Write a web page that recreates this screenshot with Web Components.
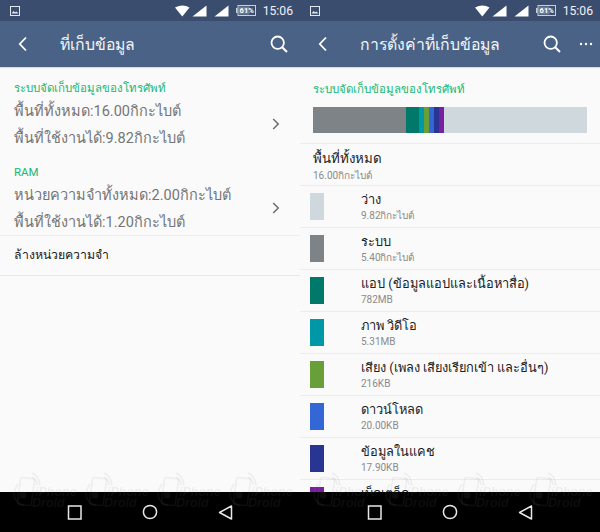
<!DOCTYPE html>
<html>
<head>
<meta charset="utf-8">
<style>
  html, body { margin: 0; padding: 0; background: #fafafa; }
  body { width: 600px; height: 532px; overflow: hidden; font-family: Roboto, "Noto Sans", sans-serif; }
  #screens { display: grid; grid-template-columns: 300px 300px; height: 532px; }
</style>
</head>
<body>
<div id="screens">
  <phone-screen>
    <status-bar></status-bar>
    <app-bar title="ที่เก็บข้อมูล"></app-bar>
    <div slot="content" style="padding-top:13px">
      <info-group label="ระบบจัดเก็บข้อมูลของโทรศัพท์" line1="พื้นที่ทั้งหมด:16.00กิกะไบต์" line2="พื้นที่ใช้งานได้:9.82กิกะไบต์"></info-group>
      <info-group label="RAM" line1="หน่วยความจำทั้งหมด:2.00กิกะไบต์" line2="พื้นที่ใช้งานได้:1.20กิกะไบต์"></info-group>
      <plain-row>ล้างหน่วยความจำ</plain-row>
    </div>
  </phone-screen>
  <phone-screen>
    <status-bar></status-bar>
    <app-bar title="การตั้งค่าที่เก็บข้อมูล" more></app-bar>
    <div slot="content">
      <usage-bar label="ระบบจัดเก็บข้อมูลของโทรศัพท์"></usage-bar>
      <total-row name="พื้นที่ทั้งหมด" size="16.00กิกะไบต์"></total-row>
      <storage-row color="#cfd8dc" name="ว่าง" size="9.82กิกะไบต์"></storage-row>
      <storage-row color="#7e8387" name="ระบบ" size="5.40กิกะไบต์"></storage-row>
      <storage-row color="#00796b" name="แอป (ข้อมูลแอปและเนื้อหาสื่อ)" size="782MB"></storage-row>
      <storage-row color="#0097a7" name="ภาพ วิดีโอ" size="5.31MB"></storage-row>
      <storage-row color="#689f38" name="เสียง (เพลง เสียงเรียกเข้า และอื่นๆ)" size="216KB"></storage-row>
      <storage-row color="#3367d6" name="ดาวน์โหลด" size="20.00KB"></storage-row>
      <storage-row color="#283593" name="ข้อมูลในแคช" size="17.90KB"></storage-row>
      <storage-row color="#7b1fa2" name="เบ็ดเตล็ด" size="1.20MB"></storage-row>
    </div>
  </phone-screen>
</div>

<script>
class PhoneScreen extends HTMLElement {
  constructor() {
    super();
    this.attachShadow({ mode: 'open' });
    this.shadowRoot.innerHTML = `
      <style>
        :host { display: flex; flex-direction: column; height: 532px; width: 300px; position: relative; overflow: hidden; background: #fafafa; }
        .content { flex: 1; min-height: 0; overflow: hidden; }
        .marks { position: absolute; left: 10px; top: 472px; display: flex; gap: 8px; pointer-events: none; }
      </style>
      <slot></slot>
      <div class="content"><slot name="content"></slot></div>
      <nav-bar></nav-bar>
      <div class="marks">
        <water-mark></water-mark><water-mark></water-mark><water-mark></water-mark><water-mark></water-mark>
      </div>`;
  }
}

class StatusBar extends HTMLElement {
  constructor() {
    super();
    this.attachShadow({ mode: 'open' });
    this.shadowRoot.innerHTML = `
      <style>
        :host { display: flex; align-items: center; height: 21px; background: #3a4d6e; padding: 0 7px 0 10px; color: #fff; flex: none; }
        .right { margin-left: auto; display: flex; align-items: center; }
        svg { display: block; }
        .time { font: 12.2px Roboto, sans-serif; margin-left: 7px; color: #f0f2f5; }
      </style>
      <svg width="10" height="10" viewBox="0 0 10 10"><rect x=".5" y=".5" width="9" height="9" fill="none" stroke="#e4e7ec"/><path d="M1.5 7.5 3.5 5 5 6.2 6.4 5.4 8.5 7.5Z" fill="#e4e7ec"/></svg>
      <div class="right">
        <svg width="15" height="12" viewBox="0 0 15 12"><path d="M0 2.6Q7.5-1.6 14.5 2.6L7.3 11.5Z" fill="#fff"/></svg>
        <svg style="margin-left:2px" width="15" height="12" viewBox="0 0 15 12"><path d="M14.5 .5V11.5H.5Z" fill="#fff"/></svg>
        <svg style="margin-left:7px" width="15" height="12" viewBox="0 0 15 12"><path d="M14.5 .5V11.5H.5Z" fill="#fff"/></svg>
        <svg style="margin-left:7px" width="20" height="11" viewBox="0 0 20 11">
          <rect x="0" y="3" width="1.5" height="5" fill="#c9d0da"/>
          <rect x="2" y=".5" width="17.5" height="10" fill="none" stroke="#c9d0da"/>
          <rect x="3" y="1.5" width="10.5" height="8" fill="#c9d0da" opacity=".35"/>
          <text x="10.7" y="8.3" text-anchor="middle" font-family="Roboto, sans-serif" font-size="7.5" font-weight="700" fill="#fff">61%</text>
        </svg>
        <span class="time">15:06</span>
      </div>`;
  }
}

class AppBar extends HTMLElement {
  constructor() {
    super();
    const more = this.hasAttribute('more');
    this.attachShadow({ mode: 'open' });
    this.shadowRoot.innerHTML = `
      <style>
        :host { display: flex; align-items: center; height: 46px; background: #4a6285; color: #fff; flex: none; box-shadow: 0 1px 1px rgba(0,0,0,.12); position: relative; }
        .back { width: 60px; padding-left: 18px; box-sizing: border-box; flex: none; }
        h1 { margin: 0; flex: 1; font: 400 15.8px Roboto, "Noto Sans", sans-serif; color: #f4f6f9; white-space: nowrap; }
        svg { display: block; }
        .tools { display: flex; align-items: center; padding-right: ${more ? '7px' : '12px'}; }
      </style>
      <div class="back"><svg width="10" height="16" viewBox="0 0 10 16"><path d="M8 1.5 1.8 8 8 14.5" fill="none" stroke="#fff" stroke-width="1.8"/></svg></div>
      <h1></h1>
      <div class="tools">
        <svg width="18" height="18" viewBox="0 0 18 18"><circle cx="7.7" cy="7.7" r="6.2" fill="none" stroke="#fff" stroke-width="1.8"/><path d="M12.2 12.2 17 17" stroke="#fff" stroke-width="2"/></svg>
        ${more ? `<svg style="margin-left:18px" width="14" height="4" viewBox="0 0 14 4"><circle cx="2" cy="2" r="1.2" fill="#fff"/><circle cx="7" cy="2" r="1.2" fill="#fff"/><circle cx="12" cy="2" r="1.2" fill="#fff"/></svg>` : ''}
      </div>`;
    this.shadowRoot.querySelector('h1').textContent = this.getAttribute('title');
  }
}

class InfoGroup extends HTMLElement {
  constructor() {
    super();
    this.attachShadow({ mode: 'open' });
    this.shadowRoot.innerHTML = `
      <style>
        :host { display: flex; align-items: center; padding: 0 20px 0 14px; height: 72px; margin-bottom: 12px; box-sizing: border-box; }
        :host(:last-of-type) { margin-bottom: -1px; }
        .text { flex: 1; }
        .label { color: #16b877; font-size: 11.5px; line-height: 16px; height: 18px; }
        .line { color: #757575; font-size: 14.5px; line-height: 27px; height: 27px; white-space: nowrap; }
        svg { display: block; margin-top: 15px; }
      </style>
      <div class="text">
        <div class="label"></div>
        <div class="line l1"></div>
        <div class="line l2"></div>
      </div>
      <svg width="8" height="12" viewBox="0 0 8 12"><path d="M1.2 1 6.2 6 1.2 11" fill="none" stroke="#6f7276" stroke-width="1.6"/></svg>`;
    this.shadowRoot.querySelector('.label').textContent = this.getAttribute('label');
    this.shadowRoot.querySelector('.l1').textContent = this.getAttribute('line1');
    this.shadowRoot.querySelector('.l2').textContent = this.getAttribute('line2');
  }
}

class PlainRow extends HTMLElement {
  constructor() {
    super();
    this.attachShadow({ mode: 'open' });
    this.shadowRoot.innerHTML = `
      <style>
        :host { display: flex; align-items: center; height: 41px; padding: 0 0 2px 14px; color: #212121; font-size: 12.3px; border-top: 1px solid #efefef; border-bottom: 1px solid #e8e8e8; box-sizing: border-box; }
      </style>
      <slot></slot>`;
  }
}

class UsageBar extends HTMLElement {
  constructor() {
    super();
    this.attachShadow({ mode: 'open' });
    this.shadowRoot.innerHTML = `
      <style>
        :host { display: block; height: 77px; padding: 14px 13px 0; box-sizing: border-box; border-bottom: 1px solid #ececec; }
        .label { color: #16b877; font-size: 11.5px; line-height: 16px; height: 16px; }
        .bar { display: flex; height: 26px; margin-top: 10px; background: #cfd8dc; }
        .bar span { display: block; }
      </style>
      <div class="label"></div>
      <div class="bar">
        <span style="width:93px;background:#7e8387"></span>
        <span style="width:13px;background:#00796b"></span>
        <span style="width:5px;background:#0097a7"></span>
        <span style="width:5px;background:#689f38"></span>
        <span style="width:5px;background:#3367d6"></span>
        <span style="width:5px;background:#283593"></span>
        <span style="width:5px;background:#7b1fa2"></span>
      </div>`;
    this.shadowRoot.querySelector('.label').textContent = this.getAttribute('label');
  }
}

class TotalRow extends HTMLElement {
  constructor() {
    super();
    this.attachShadow({ mode: 'open' });
    this.shadowRoot.innerHTML = `
      <style>
        :host { display: block; height: 42px; padding: 5px 0 0 13px; box-sizing: border-box; border-bottom: 1px solid #ececec; }
        .name { color: #212121; font-size: 13.3px; line-height: 19px; height: 19px; }
        .size { color: #8a8a8a; font-size: 10px; line-height: 15px; }
      </style>
      <div class="name"></div>
      <div class="size"></div>`;
    this.shadowRoot.querySelector('.name').textContent = this.getAttribute('name');
    this.shadowRoot.querySelector('.size').textContent = this.getAttribute('size');
  }
}

class StorageRow extends HTMLElement {
  constructor() {
    super();
    this.attachShadow({ mode: 'open' });
    this.shadowRoot.innerHTML = `
      <style>
        :host { display: flex; align-items: center; height: 42px; box-sizing: border-box; padding-left: 10px; border-bottom: 1px solid #ececec; }
        .swatch { width: 14px; height: 27px; flex: none; margin-right: 37px; }
        .name { color: #212121; font-size: 12.8px; line-height: 19px; height: 19px; white-space: nowrap; }
        .size { color: #8a8a8a; font-size: 10px; line-height: 14px; }
      </style>
      <div class="swatch"></div>
      <div>
        <div class="name"></div>
        <div class="size"></div>
      </div>`;
    this.shadowRoot.querySelector('.swatch').style.background = this.getAttribute('color');
    this.shadowRoot.querySelector('.name').textContent = this.getAttribute('name');
    this.shadowRoot.querySelector('.size').textContent = this.getAttribute('size');
  }
}

class NavBar extends HTMLElement {
  constructor() {
    super();
    this.attachShadow({ mode: 'open' });
    this.shadowRoot.innerHTML = `
      <style>
        :host { display: flex; align-items: center; height: 40px; background: #000; flex: none; padding-left: 67px; position: relative; z-index: 0; }
        svg { display: block; }
      </style>
      <svg width="15" height="15" viewBox="0 0 15 15"><rect x="1.5" y="1" width="12.5" height="13" fill="none" stroke="#e8e8e8" stroke-width="1.5"/></svg>
      <svg style="margin-left:60px" width="16" height="16" viewBox="0 0 16 16"><circle cx="8" cy="8" r="6.6" fill="none" stroke="#e8e8e8" stroke-width="1.5"/></svg>
      <svg style="margin-left:60px" width="15" height="15" viewBox="0 0 15 15"><path d="M13.5 1V14L1.5 7.5Z" fill="none" stroke="#e8e8e8" stroke-width="1.5" stroke-linejoin="round"/></svg>`;
  }
}

// faint site watermark across the bottom of each screen
class WaterMark extends HTMLElement {
  constructor() {
    super();
    this.attachShadow({ mode: 'open' });
    this.shadowRoot.innerHTML = `
      <style>
        :host { display: block; position: relative; width: 64px; height: 38px; color: rgba(128,128,128,.1); filter: blur(.4px); }
        svg { position: absolute; left: 0; top: 0; }
        span { position: absolute; font: italic 700 12.5px/11px "Liberation Sans", sans-serif; }
        .a { left: 25px; top: 15px; }
        .b { left: 22px; top: 26px; }
      </style>
      <svg width="34" height="38" viewBox="0 0 34 38" fill="none" stroke="currentColor" stroke-width="1.5">
        <rect x="9" y="6" width="14" height="27" rx="2" transform="rotate(8 16 19)"/>
        <circle cx="13" cy="23" r="3.5" fill="currentColor" stroke="none"/>
        <path d="M22 1Q29 3 30 14M22 5Q26 6 27 13"/>
        <path d="M8 12Q-2 27 14 34"/>
      </svg>
      <span class="a">iPhone</span>
      <span class="b">Droid</span>`;
  }
}

customElements.define('phone-screen', PhoneScreen);
customElements.define('status-bar', StatusBar);
customElements.define('app-bar', AppBar);
customElements.define('info-group', InfoGroup);
customElements.define('plain-row', PlainRow);
customElements.define('usage-bar', UsageBar);
customElements.define('total-row', TotalRow);
customElements.define('storage-row', StorageRow);
customElements.define('nav-bar', NavBar);
customElements.define('water-mark', WaterMark);
</script>
</body>
</html>
